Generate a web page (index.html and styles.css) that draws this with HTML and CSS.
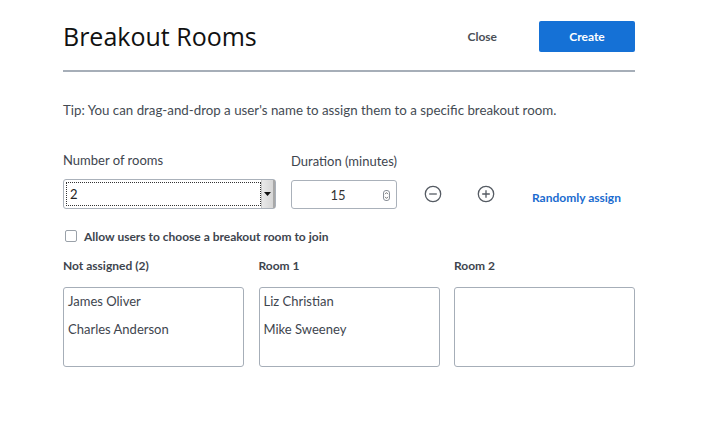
FILE: index.html
```html
<!DOCTYPE html>
<html>
<head>
<meta charset="utf-8">
<link rel="stylesheet" href="styles.css">
</head>
<body>
<div class="dialog">
  <div class="header">
    <h1 class="title">Breakout Rooms</h1>
    <div class="actions">
      <span class="close">Close</span>
      <span class="create">Create</span>
    </div>
  </div>
  <div class="rule"></div>
  <p class="tip">Tip: You can drag-and-drop a user's name to assign them to a specific breakout room.</p>
  <div class="controls">
    <div class="field rooms-field">
      <div class="label">Number of rooms</div>
      <div class="select">
        <div class="select-value"><span>2</span></div>
        <div class="select-btn"><svg width="7" height="4" viewBox="0 0 7 4"><path d="M0 0H7L3.5 4Z" fill="#111"/></svg></div>
      </div>
    </div>
    <div class="field duration-field">
      <div class="label">Duration (minutes)</div>
      <div class="number">
        <span class="num-value">15</span>
        <svg class="spinner" width="7" height="11" viewBox="0 0 7 11"><rect x="0.5" y="0.5" width="6" height="10" rx="2.5" fill="#fff" stroke="#8a9098"/><path d="M2 4.2L3.5 2.6L5 4.2" fill="none" stroke="#555" stroke-width="0.8"/><path d="M2 6.8L3.5 8.4L5 6.8" fill="none" stroke="#555" stroke-width="0.8"/></svg>
      </div>
    </div>
    <div class="icon-btn minus"><svg width="18" height="18" viewBox="0 0 18 18"><circle cx="9" cy="9" r="7.7" fill="none" stroke="#555b63" stroke-width="1.3"/><path d="M5.2 9H12.8" stroke="#555b63" stroke-width="1.3"/></svg></div>
    <div class="icon-btn plus"><svg width="18" height="18" viewBox="0 0 18 18"><circle cx="9" cy="9" r="7.7" fill="none" stroke="#555b63" stroke-width="1.3"/><path d="M5.2 9H12.8M9 5.2V12.8" stroke="#555b63" stroke-width="1.3"/></svg></div>
    <span class="random">Randomly assign</span>
  </div>
  <label class="check-row"><span class="checkbox"></span><span class="check-label">Allow users to choose a breakout room to join</span></label>
  <div class="columns">
    <div class="column">
      <div class="col-title">Not assigned (2)</div>
      <div class="box">
        <div class="name">James Oliver</div>
        <div class="name">Charles Anderson</div>
      </div>
    </div>
    <div class="column">
      <div class="col-title">Room 1</div>
      <div class="box">
        <div class="name">Liz Christian</div>
        <div class="name">Mike Sweeney</div>
      </div>
    </div>
    <div class="column">
      <div class="col-title">Room 2</div>
      <div class="box"></div>
    </div>
  </div>
</div>
</body>
</html>
```

FILE: styles.css
```css
* { box-sizing: border-box; }
html, body { margin: 0; padding: 0; background: #fff; }
body {
  font-family: "Lato", "Liberation Sans", sans-serif;
  color: #3e454e;
  font-size: 13px;
  width: 710px;
  height: 423px;
  overflow: hidden;
}
.dialog {
  padding: 21px 75px 0 63px;
}
.header {
  display: flex;
  align-items: center;
  justify-content: space-between;
  height: 31px;
}
.title {
  margin: 0;
  font-family: "Open Sans", "Lato", sans-serif;
  font-weight: 400;
  font-size: 25px;
  color: #111;
  letter-spacing: 0;
  line-height: 31px;
  margin-top: -1px;
}
.actions {
  display: flex;
  align-items: center;
}
.close {
  font-size: 12px;
  font-weight: 700;
  color: #4a4f56;
  margin-right: 42px;
}
.create {
  width: 96px;
  height: 31px;
  background: #1571d6;
  color: #fff;
  font-size: 12px;
  font-weight: 700;
  border-radius: 2px;
  display: flex;
  align-items: center;
  justify-content: center;
}
.rule {
  height: 2px;
  background: #a6aeb8;
  margin-top: 18px;
}
.tip {
  margin: 30px 0 0;
  line-height: 16px;
  font-size: 13.3px;
  color: #444b53;
}
.controls {
  display: flex;
  align-items: flex-end;
  margin-top: 34px;
}
.field { display: flex; flex-direction: column; }
.label {
  font-size: 13px;
  line-height: 16px;
  color: #3e454e;
  margin-bottom: 11px;
}
.rooms-field { width: 213px; margin-right: 15px; }
.duration-field { width: 106px; margin-right: 27px; }
.select {
  height: 30px;
  border: 1px solid #aab1ba;
  border-radius: 3px;
  display: flex;
  background: #fff;
}
.select-value {
  flex: 1;
  padding: 2px 0 2px 2px;
  display: flex;
}
.select-value span {
  flex: 1;
  border: 1px dotted #333;
  display: flex;
  align-items: center;
  padding-left: 3px;
  font-size: 13px;
  color: #222;
}
.select-btn {
  width: 14px;
  background: linear-gradient(to right, #e9e9e9, #d6d6d6);
  border-left: 1px solid #c8c8c8;
  border-right: 2px solid #a8a8a8;
  display: flex;
  align-items: center;
  justify-content: center;
}
.number {
  height: 29px;
  border: 1px solid #aab1ba;
  border-radius: 3px;
  display: flex;
  align-items: center;
  position: relative;
  padding-right: 12px;
}
.num-value {
  flex: 1;
  text-align: center;
  font-size: 13px;
  color: #333;
}
.spinner {
  position: absolute;
  right: 6px;
  top: 9px;
}
.icon-btn {
  height: 30px;
  display: flex;
  align-items: center;
}
.minus { margin-right: 35px; }
.plus { margin-right: 37px; }
.random {
  height: 30px;
  display: flex;
  align-items: center;
  padding-top: 6px;
  font-size: 12px;
  font-weight: 700;
  color: #1a6bcf;
}
.check-row {
  display: flex;
  align-items: center;
  margin-top: 19px;
  height: 16px;
}
.checkbox {
  width: 12px;
  height: 12px;
  border: 1px solid #9aa1a9;
  border-radius: 2px;
  margin-left: 2px;
  margin-right: 7px;
  background: #fff;
}
.check-label {
  font-size: 12px;
  font-weight: 700;
  color: #3e454e;
}
.columns {
  display: grid;
  grid-template-columns: repeat(3, 1fr);
  column-gap: 14.5px;
  margin-top: 14px;
}
.col-title {
  font-size: 12px;
  font-weight: 700;
  line-height: 16px;
  color: #3e454e;
  margin-bottom: 13px;
}
.box {
  height: 80px;
  border: 1px solid #a6aeb8;
  border-radius: 3px;
  padding: 5px 4px 0;
}
.name {
  font-size: 13px;
  line-height: 16px;
  color: #3e454e;
  margin-bottom: 12px;
}
```
